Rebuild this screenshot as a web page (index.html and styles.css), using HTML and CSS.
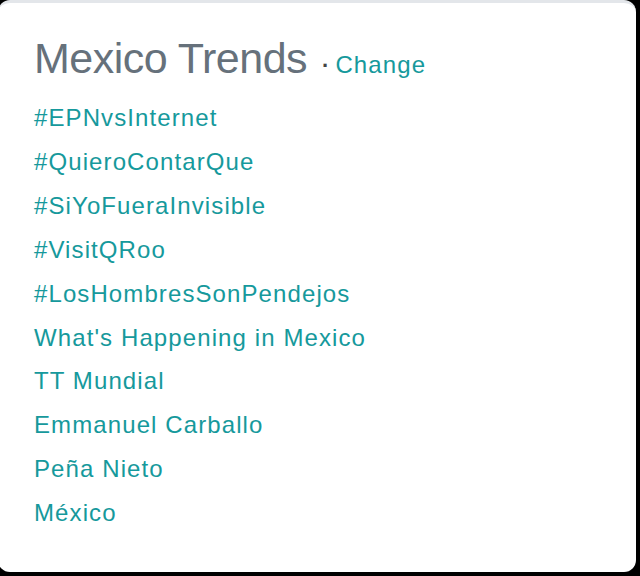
FILE: index.html
```html
<!DOCTYPE html>
<html lang="en">
<head>
    <meta charset="UTF-8">
    <title>Mexico Trends</title>
    <link rel="stylesheet" href="styles.css">
</head>
<body>
    <div class="card">
        <div class="header">
            <h2 class="title">Mexico Trends</h2>
            <span class="dot">&middot;</span>
            <a class="change" href="#">Change</a>
        </div>
        <ul class="trends">
            <li><a href="#">#EPNvsInternet</a></li>
            <li><a href="#">#QuieroContarQue</a></li>
            <li><a href="#">#SiYoFueraInvisible</a></li>
            <li><a href="#">#VisitQRoo</a></li>
            <li><a href="#">#LosHombresSonPendejos</a></li>
            <li><a href="#">What's Happening in Mexico</a></li>
            <li><a href="#">TT Mundial</a></li>
            <li><a href="#">Emmanuel Carballo</a></li>
            <li><a href="#">Peña Nieto</a></li>
            <li><a href="#">México</a></li>
        </ul>
    </div>
</body>
</html>
```
FILE: styles.css
```css
html, body {
    margin: 0;
    background: #000;
    font-family: "Liberation Sans", Arial, sans-serif;
}
.card {
    background: #fff;
    border-top: 3px solid #e3e6ea;
    border-radius: 12px;
    width: 638px;
    height: 572px;
    margin-left: -2px;
    padding-left: 36px;
    padding-top: 30px;
    box-sizing: border-box;
}
.header {
    display: flex;
    align-items: baseline;
    height: 50px;
}
.title {
    margin: 0;
    font-size: 43px;
    font-weight: normal;
    line-height: 50px;
    color: #66717b;
    letter-spacing: -0.5px;
}
.dot {
    color: #444;
    font-size: 22px;
    font-weight: bold;
    margin: 0 6px 0 15px;
}
.change {
    color: #16999c;
    font-size: 24px;
    letter-spacing: 1.1px;
    text-decoration: none;
}
.trends {
    list-style: none;
    margin: 13px 0 0;
    padding: 0;
}
.trends li {
    font-size: 24px;
    line-height: 43.9px;
    letter-spacing: 1.1px;
}
.trends a {
    color: #16999c;
    text-decoration: none;
}
```
